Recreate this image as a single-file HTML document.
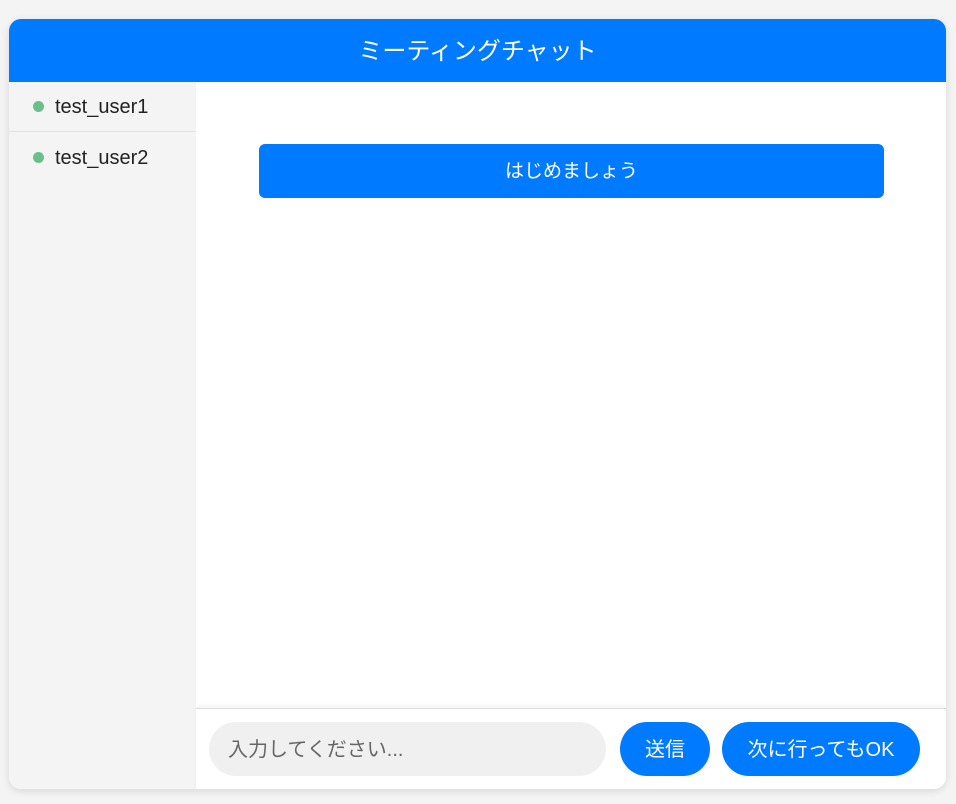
<!DOCTYPE html>
<html><head><meta charset="utf-8"><style>
*{box-sizing:border-box;margin:0;padding:0}
body{width:956px;height:804px;background:#f4f4f4;font-family:"Liberation Sans","Noto Sans CJK JP",sans-serif;position:relative;overflow:hidden}
.c{position:absolute;left:9px;top:19px;width:937px;height:770px;background:#fff;border-radius:12px;overflow:hidden;box-shadow:0 2px 8px rgba(0,0,0,.12)}
.h{height:63px;background:#007bff;color:#fff;font-size:24px;text-align:center;line-height:65px}
.s{position:absolute;left:0;top:63px;width:187px;bottom:0;background:#f4f4f4}
.u{height:50px;display:flex;align-items:center;padding-left:24px;padding-top:2px;font-size:20px;color:#222;border-bottom:1px solid #e0e2e8}
.u2{border-bottom:none;height:51px}
.d{width:11px;height:11px;border-radius:50%;background:#6abf8a;margin-right:11px;margin-top:-2px}
.b{position:absolute;left:250px;top:125px;width:625px;height:54px;background:#007bff;border-radius:6px;color:#fff;font-size:19px;text-align:center;line-height:56px}
.f{position:absolute;left:187px;top:689px;right:0;bottom:0;border-top:1px solid #ddd;box-shadow:0 -2px 4px rgba(0,0,0,.05)}
.i{position:absolute;left:13px;top:13px;width:397px;height:54px;background:#f0f0f0;border-radius:27px;font-size:20px;color:#666;line-height:56px;padding-left:19px}
.bt{position:absolute;top:13px;height:54px;background:#007bff;border-radius:27px;color:#fff;font-size:20px;line-height:56px;text-align:center}
</style></head><body>
<div class="c">
<div class="h">ミーティングチャット</div>
<div class="s">
<div class="u"><span class="d"></span>test_user1</div>
<div class="u u2"><span class="d"></span>test_user2</div>
</div>
<div class="b">はじめましょう</div>
<div class="f">
<div class="i">入力してください...</div>
<div class="bt" style="left:424px;width:90px">送信</div>
<div class="bt" style="left:526px;width:198px">次に行ってもOK</div>
</div>
</div>
</body></html>
